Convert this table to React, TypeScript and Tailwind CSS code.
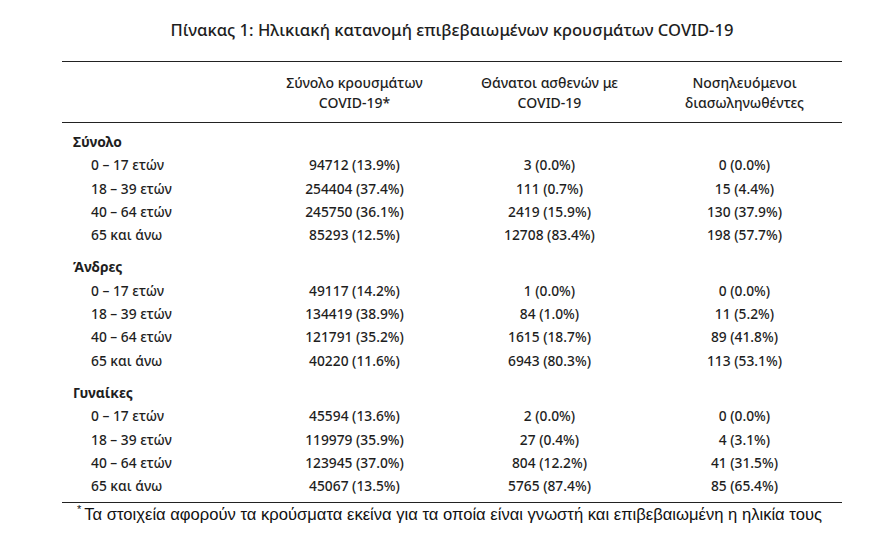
import React from "react";

type Row = [string, string, string, string];
const groups: { name: string; rows: Row[] }[] = [
  {
    name: "Σύνολο",
    rows: [
      ["0 – 17 ετών", "94712 (13.9%)", "3 (0.0%)", "0 (0.0%)"],
      ["18 – 39 ετών", "254404 (37.4%)", "111 (0.7%)", "15 (4.4%)"],
      ["40 – 64 ετών", "245750 (36.1%)", "2419 (15.9%)", "130 (37.9%)"],
      ["65 και άνω", "85293 (12.5%)", "12708 (83.4%)", "198 (57.7%)"],
    ],
  },
  {
    name: "Άνδρες",
    rows: [
      ["0 – 17 ετών", "49117 (14.2%)", "1 (0.0%)", "0 (0.0%)"],
      ["18 – 39 ετών", "134419 (38.9%)", "84 (1.0%)", "11 (5.2%)"],
      ["40 – 64 ετών", "121791 (35.2%)", "1615 (18.7%)", "89 (41.8%)"],
      ["65 και άνω", "40220 (11.6%)", "6943 (80.3%)", "113 (53.1%)"],
    ],
  },
  {
    name: "Γυναίκες",
    rows: [
      ["0 – 17 ετών", "45594 (13.6%)", "2 (0.0%)", "0 (0.0%)"],
      ["18 – 39 ετών", "119979 (35.9%)", "27 (0.4%)", "4 (3.1%)"],
      ["40 – 64 ετών", "123945 (37.0%)", "804 (12.2%)", "41 (31.5%)"],
      ["65 και άνω", "45067 (13.5%)", "5765 (87.4%)", "85 (65.4%)"],
    ],
  },
];

export default function App() {
  return (
    <div className="w-[880px] h-[553px] bg-white text-[#1e1e1e] overflow-hidden" style={{ fontFamily: '"Noto Sans", "Open Sans", sans-serif' }}>
      <div className="ml-[62px] w-[780px] flex flex-col">
        <div className="pt-[19px] h-[61px] text-center text-[16.6px] leading-[22px] font-medium">
          Πίνακας 1: Ηλικιακή κατανομή επιβεβαιωμένων κρουσμάτων COVID-19
        </div>
        <div className="border-t-[1.5px] border-[#222]" />
        <div className="grid grid-cols-4 pt-[11px] pb-[9px] text-[14px] leading-[20px] text-center font-medium">
          <div />
          <div>Σύνολο κρουσμάτων<br />COVID-19*</div>
          <div>Θάνατοι ασθενών με<br />COVID-19</div>
          <div>Νοσηλευόμενοι<br />διασωληνωθέντες</div>
        </div>
        <div className="border-t-[1.5px] border-[#222]" />
        <div className="pt-[7px] pb-[5px] flex flex-col gap-[9px] text-[13.8px] leading-[23.3px] font-medium">
          {groups.map((g) => (
            <div key={g.name} className="flex flex-col">
              <div className="pl-[11px] font-bold">{g.name}</div>
              {g.rows.map((r) => (
                <div key={r[0]} className="grid grid-cols-4">
                  <div className="pl-[29px]">{r[0]}</div>
                  <div className="text-center">{r[1]}</div>
                  <div className="text-center">{r[2]}</div>
                  <div className="text-center">{r[3]}</div>
                </div>
              ))}
            </div>
          ))}
        </div>
        <div className="border-t-[1.5px] border-[#222]" />
        <div className="pl-[15px] pt-[2px] text-[16.6px] leading-[20px] text-[#111]" style={{ fontFamily: '"Liberation Sans", Arial, sans-serif' }}>
          <span className="relative -top-[7px] text-[11px] mr-[3px]">*</span>Τα στοιχεία αφορούν τα κρούσματα εκείνα για τα οποία είναι γνωστή και επιβεβαιωμένη η ηλικία τους
        </div>
      </div>
    </div>
  );
}
